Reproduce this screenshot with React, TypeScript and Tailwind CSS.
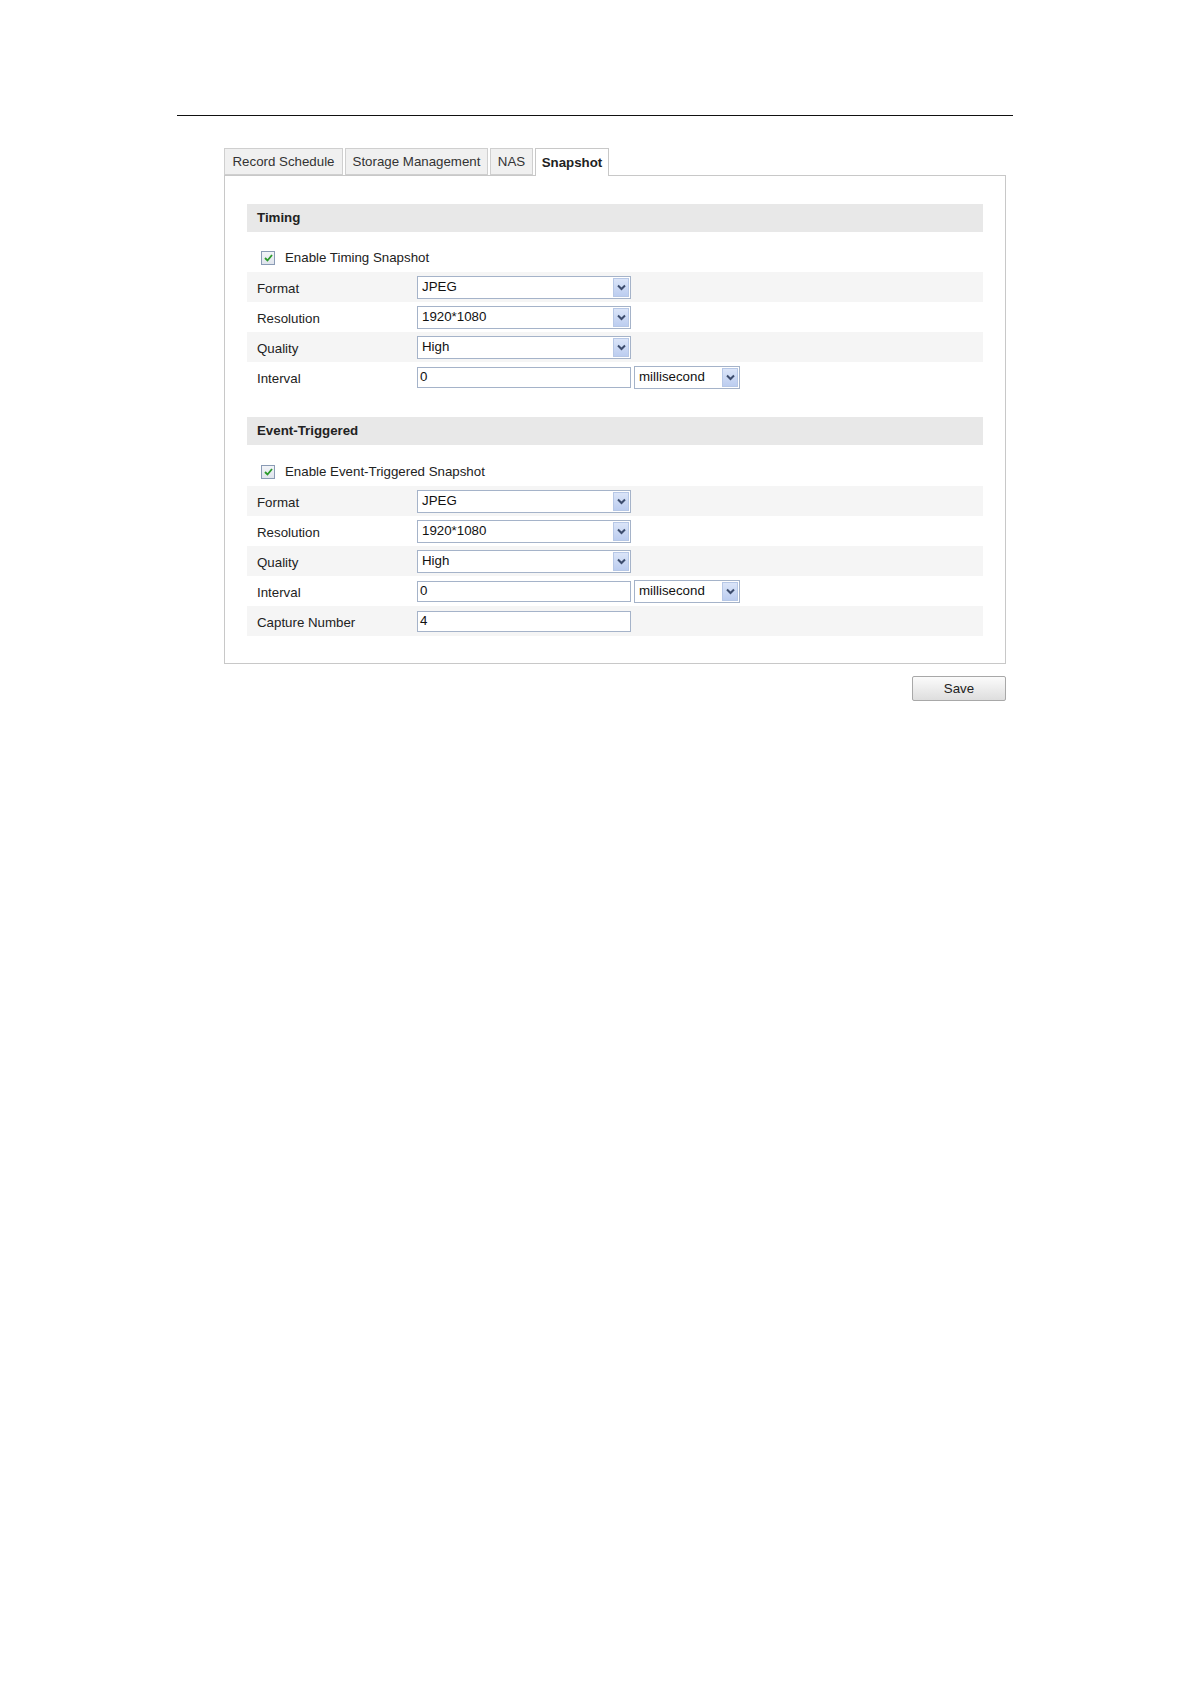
const Chevron = () => (
  <svg width="9" height="7" viewBox="0 0 9 7" className="block">
    <polyline points="1,1.5 4.5,5 8,1.5" fill="none" stroke="#3d4d6e" strokeWidth="2" />
  </svg>
);

const Select = ({ value, width }: { value: string; width: string }) => (
  <div
    className={`flex h-[23px] items-center border border-[#a5b3c9] bg-white ${width}`}
  >
    <span className="flex-1 pl-[4px] text-[13.3px] leading-none text-[#111]">{value}</span>
    <span className="mr-[1px] flex h-[19px] w-[16px] items-center justify-center border border-[#b6c7e6] bg-gradient-to-b from-[#dbe5f8] to-[#bccdf0]">
      <Chevron />
    </span>
  </div>
);

const TextInput = ({ value }: { value: string }) => (
  <div className="flex h-[21px] w-[214px] items-center border border-[#a5b3c9] bg-white">
    <span className="pl-[2px] text-[13.3px] leading-none text-[#111]">{value}</span>
  </div>
);

const Checkbox = () => (
  <span className="flex h-[14px] w-[14px] items-center justify-center border border-[#8a9bb5] bg-gradient-to-b from-[#f2f4f8] to-[#dfe4ec]">
    <svg width="9" height="8" viewBox="0 0 9 8" className="block">
      <polyline points="1,4 3.5,6.5 8,1" fill="none" stroke="#2a9a2a" strokeWidth="1.8" />
    </svg>
  </span>
);

const Row = ({ label, shaded, children }: { label: string; shaded?: boolean; children: React.ReactNode }) => (
  <div className={`flex h-[30px] items-center ${shaded ? "bg-[#f5f5f5]" : ""}`}>
    <span className="w-[170px] pl-[10px] pt-[3px] text-[13.3px] text-[#222]">{label}</span>
    {children}
  </div>
);

const SectionHeader = ({ title }: { title: string }) => (
  <div className="flex h-[28px] items-center bg-[#e8e8e8] pl-[10px] text-[13.3px] font-bold text-[#222]">
    {title}
  </div>
);

const CheckRow = ({ text, height }: { text: string; height: string }) => (
  <div className={`flex items-center pl-[14px] pt-[12px] ${height}`}>
    <Checkbox />
    <span className="ml-[10px] text-[13.3px] text-[#222]">{text}</span>
  </div>
);

const Interval = () => (
  <div className="flex items-center">
    <TextInput value="0" />
    <div className="ml-[3px]">
      <Select value="millisecond" width="w-[106px]" />
    </div>
  </div>
);

const tabs = [
  { name: "Record Schedule", w: "w-[119px]" },
  { name: "Storage Management", w: "w-[143px]" },
  { name: "NAS", w: "w-[43px]" },
  { name: "Snapshot", w: "w-[74px]", active: true },
];

export default function App() {
  return (
    <div className="min-h-[1684px] w-[1191px] bg-white pt-[115px] font-['Liberation_Sans',Arial,sans-serif]">
      <div className="ml-[177px] h-px w-[836px] bg-[#111]" />

      <div className="ml-[224px] mt-[32px] w-[782px]">
        <div className="flex gap-[2px]">
          {tabs.map((t) =>
            t.active ? (
              <div
                key={t.name}
                className={`relative z-10 -mb-px flex h-[28px] items-center justify-center border border-b-0 border-[#c8c8c8] bg-white text-[13.3px] font-bold text-[#222] ${t.w}`}
              >
                {t.name}
              </div>
            ) : (
              <div
                key={t.name}
                className={`flex h-[27px] items-center justify-center border border-[#cfcfcf] bg-[#f0f0f0] text-[13.3px] text-[#333] ${t.w}`}
              >
                {t.name}
              </div>
            )
          )}
        </div>

        <div className="border border-[#c8c8c8] px-[22px] pb-[27px] pt-[28px]">
          <SectionHeader title="Timing" />
          <CheckRow text="Enable Timing Snapshot" height="h-[40px]" />
          <Row label="Format" shaded>
            <Select value="JPEG" width="w-[214px]" />
          </Row>
          <Row label="Resolution">
            <Select value="1920*1080" width="w-[214px]" />
          </Row>
          <Row label="Quality" shaded>
            <Select value="High" width="w-[214px]" />
          </Row>
          <Row label="Interval">
            <Interval />
          </Row>

          <div className="mt-[25px]">
            <SectionHeader title="Event-Triggered" />
          </div>
          <CheckRow text="Enable Event-Triggered Snapshot" height="h-[41px]" />
          <Row label="Format" shaded>
            <Select value="JPEG" width="w-[214px]" />
          </Row>
          <Row label="Resolution">
            <Select value="1920*1080" width="w-[214px]" />
          </Row>
          <Row label="Quality" shaded>
            <Select value="High" width="w-[214px]" />
          </Row>
          <Row label="Interval">
            <Interval />
          </Row>
          <Row label="Capture Number" shaded>
            <TextInput value="4" />
          </Row>
        </div>

        <div className="mt-[12px] flex justify-end">
          <button className="h-[25px] w-[94px] rounded-[2px] border border-[#a8a8a8] bg-gradient-to-b from-[#fbfbfb] to-[#dedede] text-[13.3px] text-[#222]">
            Save
          </button>
        </div>
      </div>
    </div>
  );
}
